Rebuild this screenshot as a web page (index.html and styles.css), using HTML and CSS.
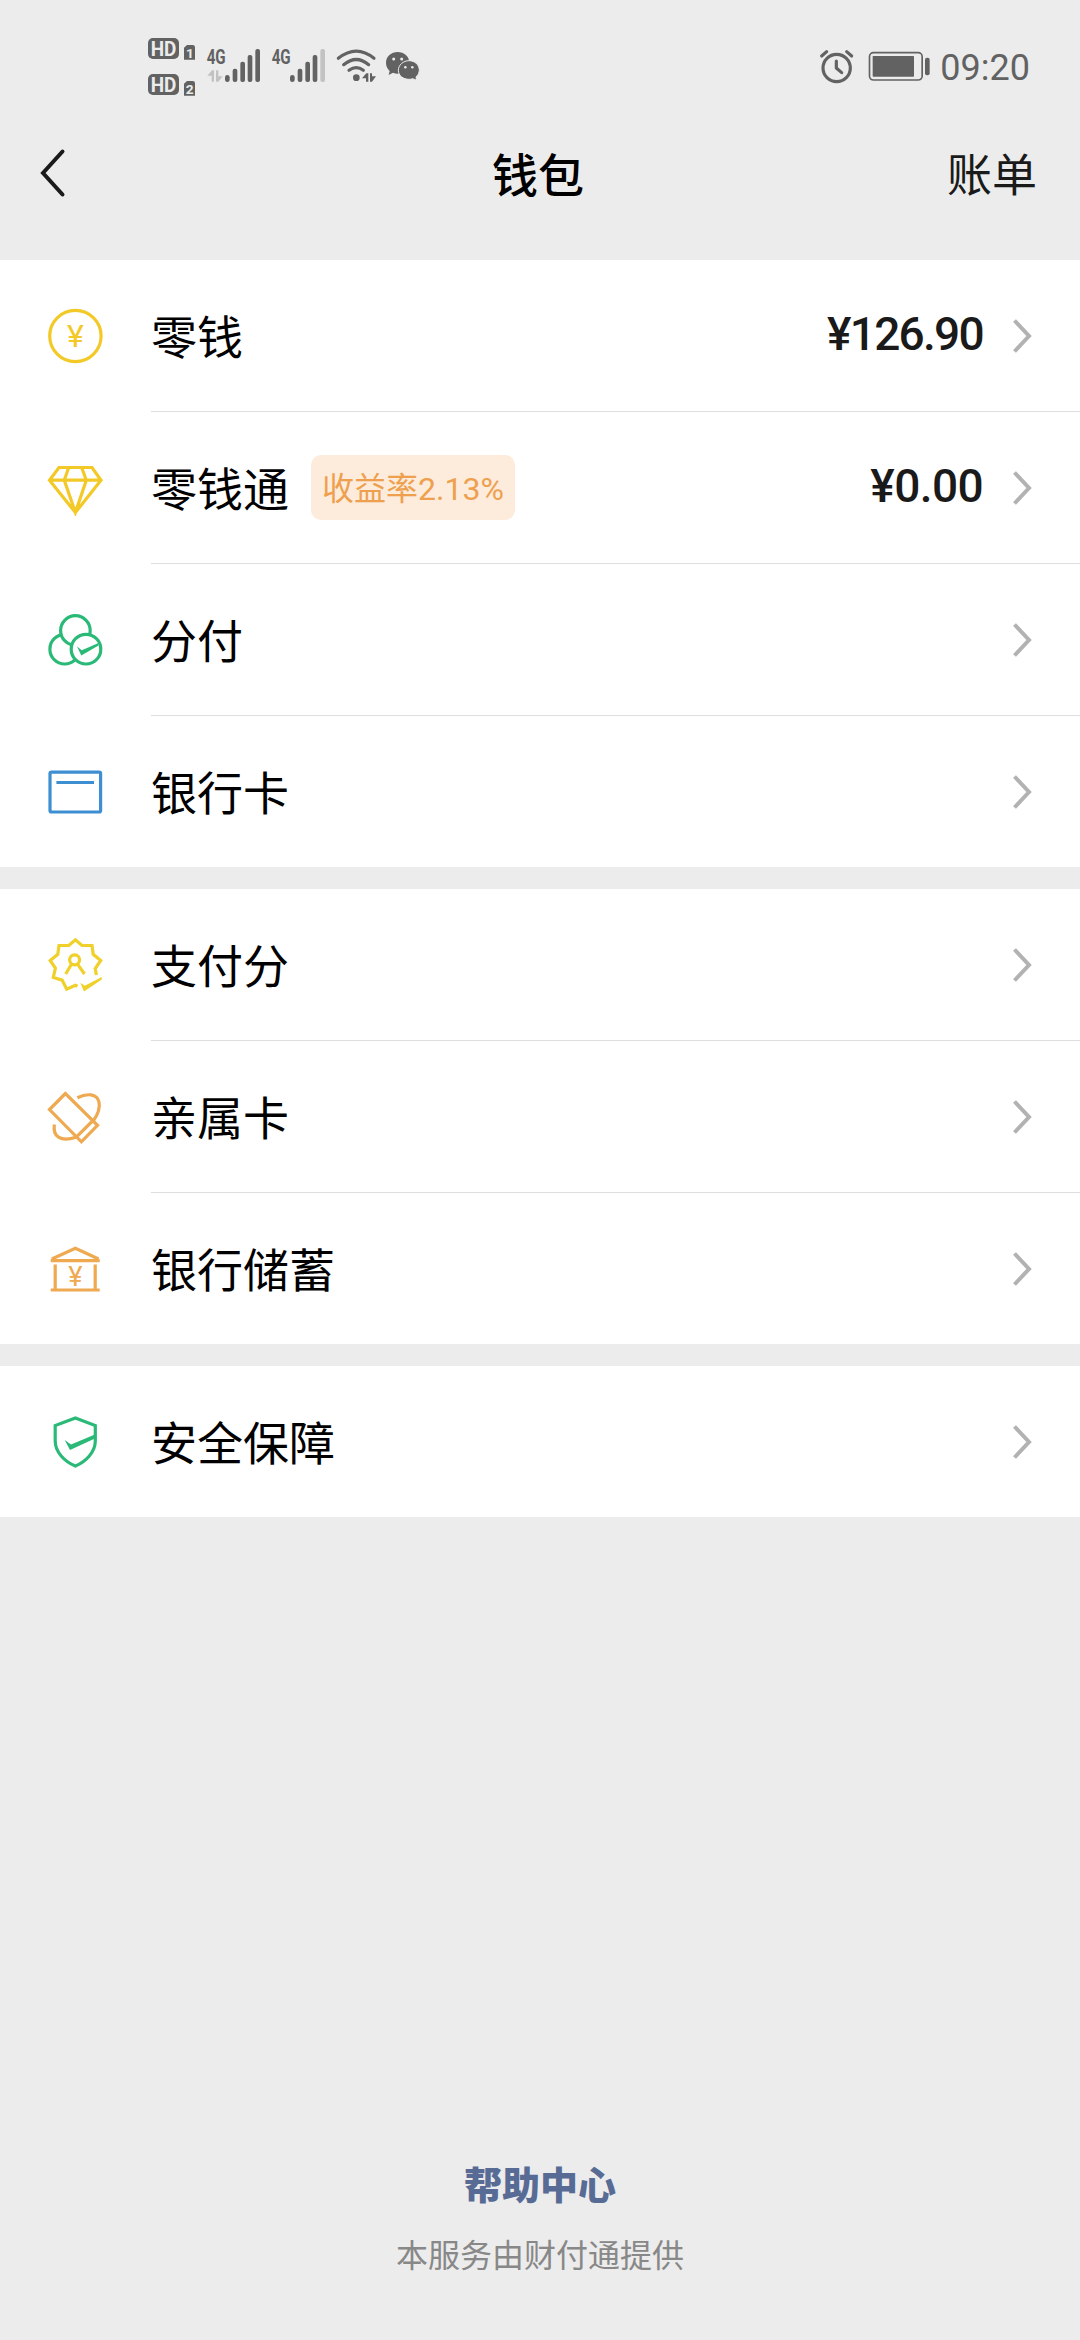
FILE: index.html
```html
<!DOCTYPE html>
<html lang="zh-CN">
<head>
<meta charset="UTF-8" />
<meta name="viewport" content="width=device-width, initial-scale=1" />
<title>钱包</title>
<link rel="stylesheet" href="styles.css">
</head>
<body>
  <div class="status-bar">
    <div class="status-left">
      <svg class="hd" width="48" height="64" viewBox="24 30 144 192">
        <rect x="24" y="39" width="93" height="63" rx="15" />
        <text class="cut" x="32" y="92" font-size="60" textLength="77" lengthAdjust="spacingAndGlyphs">HD</text>
        <path d="M132 68L141 60H158Q165 60 165 67V104H132Z" />
        <text class="cut" x="138" y="98" font-size="41">1</text>
        <rect x="24" y="147" width="93" height="63" rx="15" />
        <text class="cut" x="32" y="200" font-size="60" textLength="77" lengthAdjust="spacingAndGlyphs">HD</text>
        <path d="M132 176L141 168H158Q165 168 165 175V212H132Z" />
        <text class="cut" x="137" y="206" font-size="41">2</text>
      </svg>
      <svg class="signal" width="55" height="64" viewBox="198 30 165 192">
        <text x="200" y="117" font-size="63" textLength="57" lengthAdjust="spacingAndGlyphs">4G</text>
        <path class="faint" d="M202 152L216 136H222V170H215V152ZM228 136H235V154H248L235 170H228Z" />
        <rect x="255" y="150" width="14" height="21" rx="7" />
        <rect x="278" y="131" width="14" height="40" rx="6" />
        <rect x="301" y="110" width="14" height="61" rx="6" />
        <rect x="323" y="90" width="14" height="81" rx="6" />
        <rect x="346" y="72" width="14" height="99" rx="6" />
      </svg>
      <svg class="signal" width="55" height="64" viewBox="393 30 165 192">
        <text x="395" y="117" font-size="63" textLength="57" lengthAdjust="spacingAndGlyphs">4G</text>
        <rect x="450" y="150" width="14" height="21" rx="7" />
        <rect x="473" y="131" width="14" height="40" rx="6" />
        <rect x="496" y="110" width="14" height="61" rx="6" />
        <rect x="518" y="90" width="14" height="81" rx="6" />
        <rect class="faint" x="541" y="72" width="14" height="99" rx="6" />
      </svg>
      <svg class="wifi" width="41" height="64" viewBox="582 30 123 192">
        <path class="line" d="M589 100Q643 57 696 100M605 119Q643 88 680 119M621 136Q643 120 664 136" />
        <circle cx="643" cy="158" r="10" />
        <path d="M660 160L673 145H679V170H672V160ZM684 145H690V154H702L690 170H684Z" />
      </svg>
      <svg class="wechat" width="35" height="64" viewBox="729 30 105 192">
        <path d="M767 81C786 81 802 94 802 113S786 146 767 146Q759 146 753 143L740 150L743 138Q732 128 732 113C732 94 748 81 767 81Z" />
        <path class="bubble" d="M801 107C818 107 832 119 832 136Q832 148 822 156L824 166L812 161Q807 163 801 163C784 163 769 152 769 136S784 107 801 107Z" />
        <g class="cut"><circle cx="755" cy="102" r="4.5" /><circle cx="779" cy="102" r="4.5" /><circle cx="790" cy="127" r="3.8" /><circle cx="811" cy="127" r="3.8" /></g>
      </svg>
    </div>
    <div class="status-right">
      <svg class="alarm" width="35" height="64" viewBox="57 30 105 192">
        <circle class="line" cx="110" cy="129" r="41" />
        <path class="line" d="M109 108V129L125 143M65 93L80 80M155 93L140 80" />
      </svg>
      <svg class="battery" width="63" height="64" viewBox="204 30 189 192">
        <rect class="frame" x="208.500" y="83" width="158" height="82" rx="12" />
        <rect x="218" y="93" width="124" height="62" rx="2" />
        <rect x="375" y="98" width="14" height="53" rx="6" />
      </svg>
      <span class="clock">09:20</span>
    </div>
  </div>

  <header class="nav">
    <svg class="back" width="30" height="50" viewBox="0 0 30 50"><path d="M23.500 3.500L4 25L23.500 46.500" /></svg>
    <h1>钱包</h1>
    <a class="bill">账单</a>
  </header>

  <main>
    <section class="group">
      <div class="row">
        <svg class="icon gold" viewBox="0 0 56 56">
          <circle cx="28.400" cy="28" r="25.700" />
          <text x="28.400" y="39.300" font-size="32">¥</text>
        </svg>
        <div class="cell">
          <span class="label">零钱</span>
          <span class="amount balance">¥126.90</span>
          <svg class="arrow" viewBox="0 0 20 36"><path d="M2.500 2.500L17 18L2.500 33.500" /></svg>
        </div>
      </div>
      <div class="row">
        <svg class="icon gold" viewBox="0 0 56 56">
          <path d="M12 7.500H45L54 20.200L28.400 52.500L2.500 20.200ZM2.500 20.200H54M21.700 7.500L17.300 20.200L28.400 52.500L39.300 20.200L34.700 7.500" />
        </svg>
        <div class="cell">
          <span class="label">零钱通</span>
          <span class="tag">收益率2.13%</span>
          <span class="amount">¥0.00</span>
          <svg class="arrow" viewBox="0 0 20 36"><path d="M2.500 2.500L17 18L2.500 33.500" /></svg>
        </div>
      </div>
      <div class="row">
        <svg class="icon green" viewBox="0 0 56 56">
          <circle class="white" cx="17.700" cy="37.200" r="14.800" />
          <circle class="white" cx="28.400" cy="18.500" r="14.800" />
          <circle class="white" cx="39" cy="37.200" r="14.800" />
          <path class="solid" d="M30 34.500L34.800 38.200L51.500 31V33.500L34.300 43.500Z" />
        </svg>
        <div class="cell">
          <span class="label">分付</span>
          <svg class="arrow" viewBox="0 0 20 36"><path d="M2.500 2.500L17 18L2.500 33.500" /></svg>
        </div>
      </div>
      <div class="row">
        <svg class="icon blue" viewBox="0 0 56 56">
          <rect x="3" y="8.200" width="50.600" height="39.800" rx="1.500" />
          <path d="M9.400 18.500H47" />
        </svg>
        <div class="cell">
          <span class="label">银行卡</span>
          <svg class="arrow" viewBox="0 0 20 36"><path d="M2.500 2.500L17 18L2.500 33.500" /></svg>
        </div>
      </div>
    </section>

    <section class="group">
      <div class="row">
        <svg class="icon yellow" viewBox="0 0 56 56">
          <path d="M49.400 38L48.200 31.500L53.700 23.500L46.200 17.300L45 8.500L35 8.400L28.400 2.800L21.800 8.400L12 8.500L10.800 17.300L3.200 23.500L8.400 31.100L6.300 40.500L15.200 43.200L19.700 52.200L28.400 48.300L30.500 49.300" />
          <circle cx="27.600" cy="22.800" r="5" />
          <path d="M24.400 27.300L18.700 37M30.700 27.300L37.500 37" />
          <path class="solid" d="M33.300 45.700L37.800 48.700L54.800 40V42.500L37 54.500Z" />
        </svg>
        <div class="cell">
          <span class="label">支付分</span>
          <svg class="arrow" viewBox="0 0 20 36"><path d="M2.500 2.500L17 18L2.500 33.500" /></svg>
        </div>
      </div>
      <div class="row">
        <svg class="icon orange" viewBox="0 0 56 56">
          <path d="M18.400 4.500L2.500 20.500L34.400 52.800L50.500 36.300ZM46 31.500L29.500 47.800" />
          <path d="M30.400 8.800C40 4 50 4.500 52 13C53.300 19.500 50.500 26 46.500 31.500M7.400 35.500C5.500 47 13 53.500 29 48.300" />
        </svg>
        <div class="cell">
          <span class="label">亲属卡</span>
          <svg class="arrow" viewBox="0 0 20 36"><path d="M2.500 2.500L17 18L2.500 33.500" /></svg>
        </div>
      </div>
      <div class="row">
        <svg class="icon orange" viewBox="0 0 56 56">
          <path d="M4.800 18L28.400 7.200L51.600 18M3.700 19.700H52.700M8.200 23.500V48M48.200 23.500V48M3.700 49H52.700" />
          <text x="28.400" y="44.500" font-size="27">¥</text>
        </svg>
        <div class="cell">
          <span class="label">银行储蓄</span>
          <svg class="arrow" viewBox="0 0 20 36"><path d="M2.500 2.500L17 18L2.500 33.500" /></svg>
        </div>
      </div>
    </section>

    <section class="group">
      <div class="row">
        <svg class="icon green" viewBox="0 0 56 56">
          <path d="M28.400 4L48.300 11.500V27C48.300 38 39 47.500 28.400 52C17.500 47.500 8.200 38 8.200 27V11.500Z" />
          <path class="solid" d="M17.700 26L24 30.500L48.500 20.300V24.300L23 36Z" />
        </svg>
        <div class="cell">
          <span class="label">安全保障</span>
          <svg class="arrow" viewBox="0 0 20 36"><path d="M2.500 2.500L17 18L2.500 33.500" /></svg>
        </div>
      </div>
    </section>
  </main>

  <footer class="footer">
    <a class="help">帮助中心</a>
    <p>本服务由财付通提供</p>
  </footer>
</body>
</html>
```
FILE: styles.css
```css
* {
  box-sizing: border-box;
}
body {
  margin: 0;
  width: 1080px;
  height: 2340px;
  display: flex;
  flex-direction: column;
  background: #ececec;
  color: #000;
  font-family: Roboto, "Noto Sans CJK SC", sans-serif;
  overflow: hidden;
}
svg {
  display: block;
  flex: none;
}

/* System status bar */
.status-bar {
  display: flex;
  justify-content: space-between;
  height: 99px;
  padding: 35px 50px 0 148px;
  color: #626262;
}
.status-left,
.status-right {
  display: flex;
  height: 64px;
}
.status-left svg,
.status-right svg {
  fill: currentColor;
}
.status-left {
  gap: 8px;
}
.status-left text {
  font-weight: 700;
}
.signal {
  margin-right: 2px;
}
.hd {
  margin-right: 2px;
}
.status-bar .cut {
  fill: #ececec;
}
.status-bar .faint {
  fill: #c2c2c2;
}
.status-bar .line {
  fill: none;
  stroke: currentColor;
  stroke-width: 9.5;
  stroke-linecap: round;
  stroke-linejoin: round;
}
.bubble {
  stroke: #ececec;
  stroke-width: 3;
}
.status-bar .frame {
  fill: none;
  stroke: currentColor;
  stroke-width: 5;
}
.battery {
  margin-left: 14px;
}
.clock {
  margin-left: 9px;
  font-size: 36px;
  line-height: 67px;
}

/* Title bar */
.nav {
  display: grid;
  grid-template-columns: 1fr auto 1fr;
  align-items: center;
  height: 161px;
  padding: 0 43px 14px 39px;
}
.back {
  margin-top: 1px;
}
.back path {
  fill: none;
  stroke: #1a1a1a;
  stroke-width: 4;
  stroke-linecap: round;
}
.nav h1 {
  margin: 0 0 2px;
  font-size: 46px;
  font-weight: 500;
}
.bill {
  justify-self: end;
  font-size: 45px;
  color: #1a1a1a;
}

/* List */
.group {
  margin-bottom: 22px;
  background: #fff;
}
.row {
  display: flex;
  height: 152px;
  padding-left: 47px;
}
.row:last-child {
  height: 151px;
}
.icon {
  width: 56px;
  height: 56px;
  margin: 47.5px 48px 0 0;
  fill: none;
  stroke: currentColor;
  stroke-width: 3.2;
}
.icon text {
  fill: currentColor;
  stroke: none;
  font-weight: 400;
  text-anchor: middle;
}
.icon .solid {
  fill: currentColor;
  stroke: none;
}
.icon .white {
  fill: #fff;
}
.gold { color: #f3c928; }
.yellow { color: #f0d02a; }
.green { color: #2bb978; }
.blue { color: #3d8fd1; }
.orange { color: #eea951; }

.cell {
  flex: 1;
  display: flex;
  align-items: center;
  padding-right: 48px;
  border-bottom: 1px solid #dedede;
}
.row:last-child .cell {
  border-bottom: none;
}
.label {
  padding-bottom: 4px;
  font-size: 46px;
}
.tag {
  height: 65px;
  margin-left: 22px;
  padding: 0 11px;
  border-radius: 10px;
  background: #fdecdc;
  color: #eea04f;
  font-size: 32px;
  line-height: 68px;
}
.amount {
  margin-left: auto;
  padding-bottom: 3px;
  color: #1a1a1a;
  font-size: 46px;
  font-weight: 500;
  letter-spacing: -0.6px;
}
.balance {
  letter-spacing: -1.7px;
}
.arrow {
  width: 20px;
  height: 36px;
  margin-left: auto;
}
.amount + .arrow {
  margin-left: 29px;
}
.arrow path {
  fill: none;
  stroke: #b2b2b2;
  stroke-width: 4;
}

/* Bottom links */
.footer {
  margin-top: auto;
  padding-bottom: 64px;
  text-align: center;
}
.help {
  display: block;
  color: #576b95;
  font-size: 38px;
  font-weight: 900;
}
.footer p {
  margin: 20px 0 0;
  color: #888;
  font-size: 32px;
}
```
